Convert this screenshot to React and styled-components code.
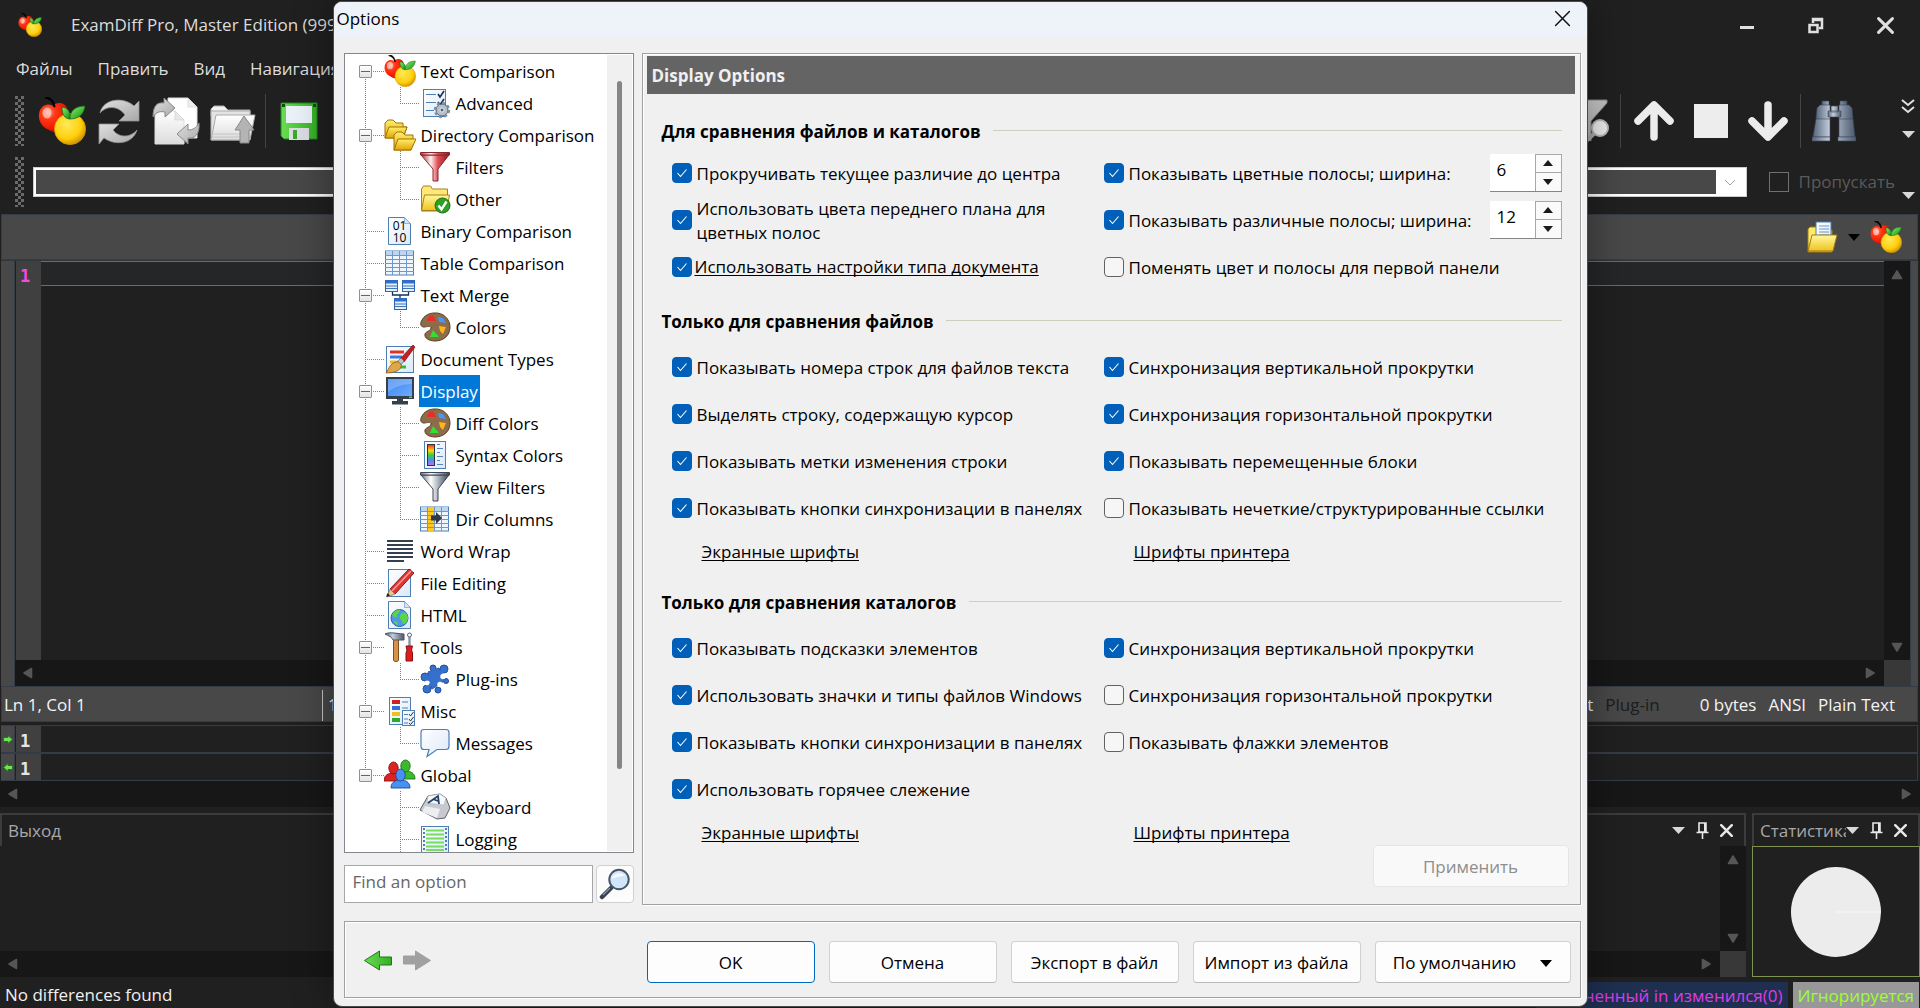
import React, { useState } from "react";
import styled, { createGlobalStyle, css } from "styled-components";

const GlobalStyle = createGlobalStyle`
  * { box-sizing: border-box; }
  html, body { margin: 0; background: #202020; }
  body, button, input { font: 17px/24px "Open Sans", "Noto Sans", sans-serif; }
  button { padding: 0; border: 0; background: none; color: inherit; }
  svg { display: block; flex: none; }
`;

/* ---------- icons ---------- */

const Icon = ({ size = 32, w, h, box = 32, boxH, children }) => (
  <svg width={w || size} height={h || size} viewBox={`0 0 ${box} ${boxH || box}`} aria-hidden="true">
    {children}
  </svg>
);

const DefsHolder = styled.svg`
  position: absolute;
`;

const SharedDefs = () => (
  <DefsHolder width="0" height="0" aria-hidden="true">
    <defs>
      <radialGradient id="gRed" cx=".32" cy=".32" r=".75">
        <stop offset="0" stopColor="#ff9a80" /><stop offset=".3" stopColor="#ff3a18" />
        <stop offset=".75" stopColor="#f01800" /><stop offset="1" stopColor="#a81000" />
      </radialGradient>
      <radialGradient id="gYellow" cx=".4" cy=".35" r=".7">
        <stop offset="0" stopColor="#ffe95a" /><stop offset=".65" stopColor="#ffcf0c" /><stop offset="1" stopColor="#c98a00" />
      </radialGradient>
      <linearGradient id="gLeaf" x1="0" y1="0" x2="1" y2="1">
        <stop offset="0" stopColor="#8cf070" /><stop offset="1" stopColor="#0f8a10" />
      </linearGradient>
      <linearGradient id="gGrey" x1="0" y1="0" x2="1" y2="1">
        <stop offset="0" stopColor="#e0e0e0" /><stop offset="1" stopColor="#a8a8a8" />
      </linearGradient>
      <linearGradient id="gPaper" x1="0" y1="0" x2="1" y2="1">
        <stop offset="0" stopColor="#ffffff" /><stop offset="1" stopColor="#dbe9f8" />
      </linearGradient>
      <linearGradient id="gWhite" x1="0" y1="0" x2="0" y2="1">
        <stop offset="0" stopColor="#ffffff" /><stop offset="1" stopColor="#dcdcdc" />
      </linearGradient>
      <linearGradient id="gFolder" x1="0" y1="0" x2="0" y2="1">
        <stop offset="0" stopColor="#fff8a0" /><stop offset="1" stopColor="#efc31c" />
      </linearGradient>
      <linearGradient id="gGold" x1="0" y1="0" x2="0" y2="1">
        <stop offset="0" stopColor="#ffef70" /><stop offset="1" stopColor="#e3a400" />
      </linearGradient>
      <linearGradient id="gGreen" x1="0" y1="0" x2="1" y2="0">
        <stop offset="0" stopColor="#6bdc55" /><stop offset="1" stopColor="#35ad25" />
      </linearGradient>
      <linearGradient id="gSteel" x1="0" y1="0" x2="1" y2="0">
        <stop offset="0" stopColor="#56657a" /><stop offset=".4" stopColor="#c3cedb" /><stop offset="1" stopColor="#4c5a6e" />
      </linearGradient>
      <linearGradient id="gRainbow" x1="0" y1="0" x2="0" y2="1">
        <stop offset="0" stopColor="#ff2020" /><stop offset=".28" stopColor="#ffd810" /><stop offset=".5" stopColor="#3ccc3c" />
        <stop offset=".75" stopColor="#4a90f0" /><stop offset="1" stopColor="#c070f0" />
      </linearGradient>
      <linearGradient id="gFunnelRed" x1="0" y1="0" x2="1" y2="0">
        <stop offset="0" stopColor="#b03038" /><stop offset=".35" stopColor="#fff0f0" /><stop offset=".6" stopColor="#e05055" /><stop offset="1" stopColor="#8a1a22" />
      </linearGradient>
      <linearGradient id="gFunnelGrey" x1="0" y1="0" x2="1" y2="0">
        <stop offset="0" stopColor="#6a7280" /><stop offset=".35" stopColor="#ffffff" /><stop offset=".65" stopColor="#a0a8b4" /><stop offset="1" stopColor="#3c4450" />
      </linearGradient>
      <linearGradient id="gScreen" x1="0" y1="0" x2="1" y2="1">
        <stop offset="0" stopColor="#3d86ee" /><stop offset="1" stopColor="#6cabff" />
      </linearGradient>
    </defs>
  </DefsHolder>
);

const Apples = ({ size = 32 }) => (
  <Icon size={size} box={48}>
    <path d="M15 9c3-4 12-5 15 4 2 7-2 17-8 21-4 2-8 1-11-1C4 30 0 24 1 17 2 9 9 5 15 9z" fill="url(#gRed)" />
    <circle cx="32" cy="32" r="15.600" fill="url(#gYellow)" stroke="#d89a00" strokeWidth=".8" />
    <path d="M16 10C15 5 12 2 7 1c5-2 9 2 10 9z" fill="#000" stroke="#000" />
    <path d="M32 22c-5 0-8-4-8-12 6 1 9 5 8 12z" fill="url(#gLeaf)" stroke="#0a6a0a" strokeWidth=".7" />
    <path d="M32 22c0-8 5-13 15-13-1 8-6 13-15 13z" fill="url(#gLeaf)" stroke="#0a6a0a" strokeWidth=".7" />
    <ellipse cx="9" cy="16" rx="4.500" ry="5.500" fill="#fff" opacity=".5" />
  </Icon>
);

const Refresh = () => (
  <Icon size={48} box={48}>
    <g fill="url(#gGrey)" stroke="#909090" strokeWidth=".8">
      <path d="M5 16C8 2 28-1 39 9l5-5v20H24l6-6C24 9 12 8 5 16z" />
      <path d="M42 33C38 47 20 49 9 41l-5 6V27h20l-6 6c6 8 17 8 24 0z" />
    </g>
  </Icon>
);

const SyncDocs = () => (
  <Icon size={48} box={48}>
    <path d="M16 1h20l9 9v31H16z" fill="#fff" stroke="#ddd" />
    <path d="M36 1v9h9z" fill="#eee" stroke="#ccc" strokeWidth=".6" />
    <path d="M3 14h20l9 9v24H3z" fill="url(#gWhite)" stroke="#ddd" />
    <path d="M23 14v9h9z" fill="#e8e8e8" stroke="#ccc" strokeWidth=".6" />
    <path d="M1 20C1 9 5 5 12 6V1l11 10-10 9v-5c-5-1-9 0-12 5z" fill="url(#gGrey)" stroke="#888" />
    <path d="M47 26c1 11-4 16-11 15v6L25 37l11-10v6c5 0 8-2 11-7z" fill="url(#gGrey)" stroke="#888" />
  </Icon>
);

const FolderUp = () => (
  <Icon size={48} box={48}>
    <path d="M2 12l3-3h10l4 4h22v6H2z" fill="#f2f2f2" stroke="#aaa" />
    <path d="M2 14h39v29H2z" fill="#e4e4e4" stroke="#aaa" />
    <path d="M7 18h39l-5 25H2z" fill="url(#gWhite)" stroke="#aaa" />
    <path d="M3 37h38M3 40h38" stroke="#c4c4c4" />
    <path d="M35 19l10 14h-5v13h-9V33h-5z" fill="#b4b4b4" stroke="#888" />
  </Icon>
);

const Floppy = () => (
  <Icon size={38} box={38}>
    <path d="M1 1h36v36H4l-3-3z" fill="url(#gGreen)" stroke="#1c8a14" />
    <rect x="6" y="4" width="26" height="17" fill="#eaf2f8" />
    <rect x="2" y="2" width="3" height="3" fill="#0c500a" /><rect x="33" y="2" width="3" height="3" fill="#0c500a" />
    <rect x="9" y="26" width="20" height="12" fill="#dcdce4" />
    <rect x="13" y="28" width="4" height="9" fill="#35ad25" />
  </Icon>
);

const FunnelSearch = () => (
  <Icon size={48} box={48}>
    <path d="M0 3h43v3L27 24v20l-8-6V24L0 6z" fill="url(#gGrey)" stroke="#888" />
    <path d="M20 46l12-11" stroke="#aaa" strokeWidth="4" />
    <circle cx="36" cy="31" r="8" fill="#eee" stroke="#bbb" strokeWidth="2" />
  </Icon>
);

const BigArrow = ({ down }) => (
  <Icon size={40} box={40}>
    <g transform={down ? "rotate(180 20 20)" : undefined} stroke="#ececec" strokeWidth="7.500" fill="none" strokeLinecap="round" strokeLinejoin="round">
      <path d="M20 36V5M4 20L20 4l16 16" />
    </g>
  </Icon>
);

const Square = () => (
  <Icon size={34} box={34}><rect width="34" height="34" fill="#ededed" /></Icon>
);

const Binoculars = () => (
  <Icon size={44} box={44}>
    <g fill="url(#gSteel)" stroke="#3c485a" strokeWidth=".6">
      <path d="M10 2h7v5h-7zM28 2h7v5h-7z" />
      <path d="M5 9l3-3h10v15L4 20zM40 9l-3-3H27v15l14-1z" />
      <path d="M4 20h14v18H1zM41 20H27v18h16z" />
      <path d="M0 38h18v4H0zM26 38h18v4H26z" />
      <path d="M16 12h13v6H16zM19 7h7v6h-7z" />
    </g>
  </Icon>
);

const OpenDoc = () => (
  <Icon size={32}>
    <path d="M2 8l2-2h8l2 3h12v22H2z" fill="#ffe96a" stroke="#a07a10" />
    <path d="M10 1h15v20H10z" fill="url(#gPaper)" stroke="#4a7ab8" />
    <path d="M13 5h10M13 8h10M13 11h10M13 14h10" stroke="#6f96c8" />
    <path d="M6 14h25l-4 16H2z" fill="url(#gFolder)" stroke="#a07a10" />
  </Icon>
);

const Tri = ({ dir = "down", w = 13, h = 7, color = "#d8d8d8" }) => {
  const d = { down: "M0 0h12L6 6z", up: "M0 6h12L6 0z" }[dir];
  return <svg width={w} height={h} viewBox="0 0 12 6" preserveAspectRatio="none" aria-hidden="true"><path d={d} fill={color} /></svg>;
};

const ScrollArrow = ({ dir }) => (
  <svg width="12" height="12" viewBox="0 0 12 12" aria-hidden="true">
    <path
      transform={`rotate(${{ up: 0, right: 90, down: 180, left: 270 }[dir]} 6 6)`}
      d="M6 2l4.500 7.500h-9z" fill="#565656" stroke="#565656" strokeWidth="1.600" strokeLinejoin="round"
    />
  </svg>
);

const Pin = () => (
  <svg width="13" height="17" viewBox="0 0 13 17" aria-hidden="true">
    <path d="M3 1h7v9H3zM0.500 10.500h12M6.500 10v7" fill="none" stroke="#e8e8e8" strokeWidth="1.600" />
    <path d="M8 1h2v9H8z" fill="#e8e8e8" />
  </svg>
);

const Cross = ({ size = 15, color = "#e8e8e8", stroke = 2.6 }) => (
  <svg width={size} height={size} viewBox="0 0 16 16" aria-hidden="true">
    <path d="M1.500 1.500l13 13M14.500 1.500l-13 13" stroke={color} strokeWidth={stroke} strokeLinecap="round" />
  </svg>
);

const Chevrons = () => (
  <svg width="14" height="15" viewBox="0 0 14 15" aria-hidden="true">
    <path d="M1 1l6 5 6-5M1 8l6 5 6-5" fill="none" stroke="#e0e0e0" strokeWidth="2" />
  </svg>
);

const SmallArrow = ({ left }) => (
  <svg width="10" height="9" viewBox="0 0 10 9" aria-hidden="true">
    <path transform={left ? "rotate(180 5 4.500)" : undefined} d="M.5 2.500h4.500v-2l4.500 4-4.500 4v-2H.5z" fill="#6fe455" stroke="#1f7a14" />
  </svg>
);

const Funnel = ({ fill, edge }) => (
  <Icon>
    <path d="M2 4h28L19 18v12h-5V18z" fill={`url(#${fill})`} stroke={edge} />
    <path d="M1.500 1.500h29v2.500h-29z" fill={`url(#${fill})`} stroke={edge} />
  </Icon>
);

const Palette = () => (
  <Icon>
    <path d="M15 2c9-1 16 6 16 14 0 9-7 14-15 14-6 0-11-3-10-7 1-3 6-3 6-6s-4-1-7-1c-4 0-4-4-2-7 2-4 7-7 12-7z" fill="#8c6d49" stroke="#57401f" />
    <path d="M10 5l4-1 3 6H8z" fill="#f02a2a" /><path d="M19 6l5 1 3 5-7-1z" fill="#4a94ff" />
    <path d="M20 15l7 1-3 7-3-3z" fill="#ffb41c" /><path d="M14 19l6 7h-9z" fill="#38dc38" />
  </Icon>
);

const Person = ({ x, y, c, e }) => (
  <g transform={`translate(${x} ${y})`} fill={c} stroke={e} strokeWidth=".9">
    <path d="M0 19c0-5 3-7 7-8h5c4 1 7 3 7 8z" />
    <ellipse cx="9.500" cy="6" rx="4.700" ry="6" />
  </g>
);

const Grid = ({ y = 4, children }) => (
  <>
    <rect x="1.500" y={y} width="28" height="24" fill="#eef5fc" stroke="#4d7fb5" />
    <rect x="2" y={y} width="27" height="4.500" fill="#bcd6f0" />
    {children}
    <path d={`M1 ${y + 4.5}h29M1 ${y + 8.500}h29M1 ${y + 12.500}h29M1 ${y + 16.500}h29M1 ${y + 20.500}h29M8.500 ${y}v24M15.500 ${y}v24M22.500 ${y}v24`} stroke="#6d98c8" />
  </>
);

const Sheet = () => (
  <>
    <path d="M4.500 2.500h16l6 6v21h-22z" fill="url(#gPaper)" stroke="#4d7fb5" />
    <path d="M20.500 2.500v6h6z" fill="#d5e5f5" stroke="#7fa5cf" strokeWidth=".8" />
  </>
);

const MiniTable = ({ x, y }) => (
  <g>
    <rect x={x} y={y} width="12" height="11" fill="#e2effc" stroke="#2f66b0" />
    <rect x={x} y={y} width="12" height="3" fill="#2f6fd0" />
    <path d={`M${x} ${y + 5.500}h12M${x} ${y + 8}h12`} stroke="#2f66b0" strokeWidth=".9" />
  </g>
);

const treeIcons = {
  apples: <Apples />,
  advanced: (
    <Icon>
      <rect x="4.500" y="2.500" width="22" height="27" fill="url(#gPaper)" stroke="#4d7fb5" />
      <path d="M7 7.500h10M7 15.500h10M7 23.500h8" stroke="#4d7fb5" />
      <path d="M19 7l2 3 4-6M19 15l2 3 4-6" fill="none" stroke="#14305c" strokeWidth="1.600" />
      <circle cx="23" cy="23" r="6" fill="#b4c0cc" stroke="#4f5f70" strokeWidth="1" />
      <circle cx="23" cy="23" r="7" fill="none" stroke="#7f8e9e" strokeWidth="2.400" strokeDasharray="3 2.500" />
      <circle cx="23" cy="23" r="2" fill="#4f5f70" stroke="#e8eef4" />
    </Icon>
  ),
  folders: (
    <Icon>
      <path d="M1 4l3-3h5l3 3h7v4h4l-4 11H1z" fill="url(#gGold)" stroke="#a07400" />
      <path d="M5 8h18l-4 11H1z" fill="url(#gGold)" stroke="#a07400" />
      <path d="M10 16l3-3h5l3 3h8v4l-2 11H10z" fill="url(#gGold)" stroke="#a07400" />
      <path d="M14 20h18l-5 11H10z" fill="url(#gGold)" stroke="#a07400" />
    </Icon>
  ),
  filterRed: <Funnel fill="gFunnelRed" edge="#8a2830" />,
  folderCheck: (
    <Icon>
      <path d="M2.500 6l2-3h7l2 3h15v22h-26z" fill="#ffe878" stroke="#a8801a" />
      <path d="M5.500 12h25l-3 15.500h-25z" fill="url(#gFolder)" stroke="#a8801a" />
      <circle cx="23.500" cy="22.500" r="7.500" fill="#2ea024" stroke="#1a7014" />
      <path d="M19.500 22.500l3 4 5-8" fill="none" stroke="#fff" strokeWidth="2.400" />
    </Icon>
  ),
  binary: (
    <Icon>
      <Sheet />
      <text x="15.500" y="15" fontSize="12" fontFamily="Open Sans" textAnchor="middle">01</text>
      <text x="15.500" y="27" fontSize="12" fontFamily="Open Sans" textAnchor="middle">10</text>
    </Icon>
  ),
  table: <Icon><Grid /></Icon>,
  merge: (
    <Icon>
      <path d="M8.500 12v4h16v-4M16 16v4" fill="none" stroke="#14305c" strokeWidth="1.300" />
      <MiniTable x={1.5} y={1.5} /><MiniTable x={18.5} y={1.5} /><MiniTable x={10.5} y={19.5} />
    </Icon>
  ),
  palette: <Palette />,
  docTypes: (
    <Icon>
      <rect x="2.500" y="3.500" width="27" height="26" fill="url(#gPaper)" stroke="#4d7fb5" />
      <path d="M6 9h14" stroke="#e03028" strokeWidth="3" /><path d="M6 14h12" stroke="#3a7ae0" strokeWidth="3" />
      <path d="M6 19h8" stroke="#f0c020" strokeWidth="3" /><path d="M13 24h9" stroke="#38b838" strokeWidth="3" />
      <path d="M16 16L29 2l2 2-11 15z" fill="#c02020" stroke="#801010" strokeWidth=".7" />
      <path d="M13 19l4-4 3 3-3 4z" fill="#b8c4d0" stroke="#59687a" strokeWidth=".7" />
      <path d="M12 19c3-1 6 2 5 5-2 5-9 6-15 6 3-4 4-10 10-11z" fill="#dfa64a" stroke="#7c5018" strokeWidth=".7" />
    </Icon>
  ),
  display: (
    <Icon>
      <rect x="2" y="2" width="28" height="22" fill="#35404e" />
      <rect x="4" y="4" width="24" height="17" fill="url(#gScreen)" />
      <path d="M4 4h24v5C18 9 10 12 4 17z" fill="#fff" opacity=".22" />
      <path d="M13 24h6v2h5v3.500H8V26h5z" fill="#35404e" />
      <rect x="25" y="21.500" width="3" height="1.500" fill="#50dc40" />
    </Icon>
  ),
  syntax: (
    <Icon>
      <rect x="5.500" y="2.500" width="21" height="27" fill="url(#gPaper)" stroke="#4d7fb5" />
      <rect x="8.500" y="5.500" width="7" height="21" fill="url(#gRainbow)" stroke="#2a3440" />
      <path d="M18 5.500h3M18 9.500h6M18 13.500h3M18 17.500h6M18 21.500h3M18 25.500h6" stroke="#5585c0" strokeWidth="1.200" />
    </Icon>
  ),
  filterGrey: <Funnel fill="gFunnelGrey" edge="#3c4654" />,
  columns: (
    <Icon>
      <Grid>
        <rect x="8.500" y="4" width="7" height="24" fill="#ffc81e" />
      </Grid>
      <path d="M12 12.500h5V9l6 6-6 6v-3.500h-5z" fill="#2d3946" />
    </Icon>
  ),
  wrap: (
    <Icon><path d="M3 6h26M3 10h26M3 14h26M3 18h26M3 22h26M3 26h17" stroke="#35404e" strokeWidth="2" /></Icon>
  ),
  pencil: (
    <Icon>
      <rect x="4.500" y="2.500" width="22" height="27" fill="url(#gPaper)" stroke="#4d7fb5" />
      <path d="M6 22L25 2l5 4-19 21z" fill="#e03434" stroke="#8a1818" />
      <path d="M8 24L27 4" stroke="#ff9c94" strokeWidth="1.500" />
      <path d="M6 22l5 5-8 3z" fill="#ecc890" stroke="#8a6a3a" strokeWidth=".7" />
      <path d="M2 30l1.500-4 2.500 2.500z" fill="#222" />
    </Icon>
  ),
  html: (
    <Icon>
      <Sheet />
      <circle cx="15.500" cy="19" r="8.500" fill="#4f97e8" stroke="#2c5fa8" />
      <path d="M8 16c2-5 7-6 8-5 0 3-3 3-3 6s-3 1-5-1zM17 15c4-3 6-1 7 3 0 4-2 7-4 7s-1-4-4-5c-1-2 0-4 1-5zM10 22c3 0 4 2 4 4-2 0-4-2-4-4z" fill="#5cd448" />
    </Icon>
  ),
  tools: (
    <Icon>
      <path d="M9.500 8h5v21c0 2-5 2-5 0z" fill="#d6924a" stroke="#80501c" />
      <path d="M1 3c4-2 8-1 19 0v6H9C8 6 5 5 1 3z" fill="url(#gSteel)" stroke="#4a5666" />
      <path d="M25.500 2v13" stroke="#8794a4" strokeWidth="2.400" /><circle cx="25.500" cy="4" r="2" fill="#fff" stroke="#59687a" />
      <path d="M22 15h6.500l-1 4 1 3v8h-6.500v-8l1-3z" fill="#d81e1e" stroke="#8c0f0f" />
    </Icon>
  ),
  plugin: (
    <Icon>
      <g stroke="#1d4a92" fill="#1d4a92">
        <path d="M9 9l11-4 5 13-12 8z" />
        <circle cx="25" cy="6" r="4" /><circle cx="6" cy="14" r="4" /><circle cx="8" cy="26" r="4" /><circle cx="14" cy="5" r="3" />
        <circle cx="27" cy="18" r="2.500" /><circle cx="19" cy="27" r="3" />
      </g>
      <g fill="#3570cc">
        <path d="M9 9l11-4 5 13-12 8z" /><path d="M18 10l6-5 2 2-4 6zM8 11l7 8-6 8-2-1 4-7-6-4z" />
        <circle cx="25" cy="6" r="3.600" /><circle cx="6" cy="14" r="3.600" /><circle cx="8" cy="26" r="3.600" /><circle cx="14" cy="5" r="2.600" />
        <circle cx="27" cy="18" r="2.100" /><circle cx="19" cy="27" r="2.600" />
      </g>
      <circle cx="24" cy="13.500" r="2.700" fill="#fff" /><circle cx="8" cy="20" r="2.400" fill="#fff" /><circle cx="21" cy="21.500" r="2.700" fill="#fff" />
    </Icon>
  ),
  misc: (
    <Icon>
      <rect x="5.500" y="2.500" width="21" height="27" fill="url(#gPaper)" stroke="#4d7fb5" />
      <path d="M8 7h8" stroke="#d02020" strokeWidth="4" /><path d="M8 13h8" stroke="#3070d8" strokeWidth="4" />
      <path d="M8 19h8" stroke="#f0c020" strokeWidth="4" /><path d="M8 25h8" stroke="#30a828" strokeWidth="4" />
      <path d="M18 7h6M18 13h6" stroke="#4d7fb5" />
      <rect x="18.500" y="15.500" width="12" height="15" fill="url(#gPaper)" stroke="#4d7fb5" />
      <path d="M20 19.500h4M20 24h4M20 28h4" stroke="#4d7fb5" />
      <path d="M25 19l1.500 2 3-4M25 24l1.500 2 3-4M25 28l1.500 1.500 3-3.500" fill="none" stroke="#2d3946" />
    </Icon>
  ),
  bubble: (
    <Icon>
      <path d="M5 2.500h22c2 0 3 1 3 3v14c0 2-1 3-3 3h-9l-10 7 2-7H5c-2 0-3-1-3-3v-14c0-2 1-3 3-3z" fill="url(#gPaper)" stroke="#4d7fb5" strokeWidth="1.200" />
    </Icon>
  ),
  people: (
    <Icon>
      <Person x={12} y={1} c="#3cb82c" e="#1d7414" /><Person x={0} y={3} c="#dc2222" e="#8c1010" /><Person x={7} y={10} c="#4a90f0" e="#1d4a92" />
    </Icon>
  ),
  key: (
    <Icon>
      <path d="M1 19L9 5l12-2 6 4 4 10-5 10-8 1z" fill="#c6cace" stroke="#5c6268" />
      <path d="M9 5l12-2 6 4-2 7-17-2z" fill="#f6f8fa" stroke="#a8aeb4" strokeWidth=".6" />
      <path d="M6 15l15 3-3 9-15-6z" fill="#eceef0" />
      <path d="M9 12l10-7 1 8M14 8l5 2" fill="none" stroke="#22406c" strokeWidth="1.800" />
    </Icon>
  ),
  log: (
    <Icon>
      <rect x="2.500" y="3.500" width="27" height="26" fill="url(#gPaper)" stroke="#4d7fb5" />
      <path d="M7 7.500h18M7 11.500h18M7 15.500h18M7 19.500h18M7 23.500h18M7 27h18" stroke="#76dc62" strokeWidth="2" />
      <path d="M5 5v24M27 5v24" stroke="#4d7fb5" strokeWidth="2" strokeDasharray="2 2" />
    </Icon>
  ),
};

const Magnifier = () => (
  <Icon>
    <path d="M3 29l9-9" stroke="#36404e" strokeWidth="4.500" strokeLinecap="round" />
    <path d="M4 27l7-7" stroke="#8795a6" strokeWidth="1.200" />
    <circle cx="20" cy="11.500" r="9.700" fill="#cfe6fa" stroke="#4a5666" strokeWidth="2" />
    <path d="M12.500 11c1-6 10-8 14-3-5 0-9 1-14 3z" fill="#fff" opacity=".8" />
  </Icon>
);

const NavArrow = ({ right, fill, stroke }) => (
  <svg width="28" height="21" viewBox="0 0 28 21" aria-hidden="true">
    <path transform={right ? "rotate(180 14 10.500)" : undefined} d="M.5 10.500L15.500 1v6H27.500v8H15.500v5z" fill={fill} stroke={stroke} />
  </svg>
);

/* ---------- application window ---------- */

const Window = styled.div`
  position: relative;
  display: flex;
  flex-direction: column;
  min-height: 100vh;
  background: #202020;
  color: #dcdcdc;
  overflow: hidden;
`;

const TitleBar = styled.header`
  display: flex;
  align-items: center;
  height: 50px;
  padding: 0 26px 0 18px;
  white-space: nowrap;
  h1 { flex: 1; margin: 0 0 0 29px; font-size: 17px; font-weight: 400; }
`;

const WindowButtons = styled.div`
  display: flex;
  align-items: center;
  gap: 53px;
`;

const MenuBar = styled.nav`
  display: flex;
  align-items: center;
  gap: 25px;
  height: 38px;
  padding: 0 16px;
`;

const ToolBar = styled.div`
  display: flex;
  align-items: center;
  height: ${(p) => p.$height}px;
  padding: 0 5px 0 15px;
`;

const Grip = styled.span`
  width: 9px;
  height: 50px;
  margin-right: 9px;
  background:
    conic-gradient(transparent 75%, #6a6a6a 0) 0 0 / 6px 6px,
    conic-gradient(transparent 75%, #6a6a6a 0) 3px 3px / 6px 6px;
`;

const Tool = styled.button`
  display: flex;
  align-items: center;
  justify-content: center;
  width: 57px;
  height: 54px;
`;

const Divider = styled.span`
  width: 1px;
  height: 54px;
  margin: 0 4px;
  background: #444;
`;

const Spacer = styled.span`
  flex: 1;
`;

const Overflow = styled.div`
  display: flex;
  flex-direction: column;
  align-items: center;
  justify-content: ${(p) => (p.$end ? "flex-end" : "space-between")};
  height: 44px;
  margin-left: ${(p) => (p.$end ? 7 : 39)}px;
  padding-bottom: 5px;
`;

const ComboBox = styled.div`
  display: flex;
  flex: 1;
  height: 30px;
  margin-right: 22px;
  border: 1px solid #ccc;
  background: #fff;
  padding: 2px;
  input { flex: 1; min-width: 0; border: 0; background: #484848; color: #fff; outline: 0; }
  button { display: flex; align-items: center; justify-content: center; width: 28px; }
`;

const SkipLabel = styled.label`
  display: flex;
  align-items: center;
  gap: 10px;
  color: #5a5a5a;
  input { appearance: none; width: 20px; height: 20px; margin: 0; border: 1px solid #707070; }
`;

const PaneHeader = styled.div`
  display: flex;
  align-items: center;
  justify-content: flex-end;
  gap: 10px;
  height: 46px;
  margin: 3px 2px 0 1px;
  padding-right: 15px;
  border: 1px solid #363c46;
  background: #484848;
`;

const Editor = styled.div`
  display: flex;
  flex: 1;
  margin: 0 2px 0 1px;
  border-top: 1px solid #30353e;
`;

const Strip = styled.div`
  display: flex;
  align-items: center;
  justify-content: center;
  flex: none;
  width: ${(p) => p.$width}px;
  background: #484848;
  border: solid #363c46;
  border-width: 0 ${(p) => (p.$left ? 0 : 1)}px 0 ${(p) => (p.$left ? 1 : 0)}px;
`;

const EditorBody = styled.div`
  display: flex;
  flex: 1;
  flex-direction: column;
`;

const EditorRow = styled.div`
  display: flex;
  flex: 1;
`;

const LineNumbers = styled.div`
  width: 25px;
  margin-left: 1px;
  padding: 5px 0 0 4px;
  background: #404040;
  color: ${(p) => (p.$current ? "#f24be0" : "#e6e6e6")};
  font: bold 17px/21px "DejaVu Sans Mono", monospace;
`;

const CodeArea = styled.div`
  flex: 1;
`;

const CurrentLine = styled.div`
  height: 25px;
  border: solid #5f6c86;
  border-width: 1px 0;
  background: #242628;
`;

const VScroll = styled.div`
  display: flex;
  flex-direction: column;
  align-items: center;
  justify-content: space-between;
  width: 26px;
  padding: 8px 0 7px;
  background: #171717;
`;

const HScroll = styled.div`
  display: flex;
  flex: ${(p) => (p.$grow ? 1 : "none")};
  align-items: center;
  justify-content: space-between;
  height: 26px;
  padding: 0 8px 0 7px;
  background: #171717;
`;

const HScrollRow = styled.div`
  display: flex;
`;

const Corner = styled.span`
  width: 26px;
  height: 26px;
  background: #383838;
`;

const PaneStatus = styled.div`
  display: flex;
  align-items: center;
  height: 36px;
  margin: 0 2px 3px 1px;
  padding: 2px 22px 0 2px;
  border: 1px solid #363c46;
  background: #484848;
  color: #f4f4f4;
`;

const StatusText = styled.span`
  margin-left: ${(p) => p.$gap || 0}px;
  color: ${(p) => (p.$dim ? "#1c1c1c" : "inherit")};
  width: ${(p) => (p.$width ? `${p.$width}px` : "auto")};
`;

const StatusRule = styled.span`
  width: 1px;
  height: 31px;
  margin-right: 5px;
  background: #c8c8c8;
`;

const DiffLine = styled.div`
  display: flex;
  height: 28px;
  margin: 0 2px 0 1px;
  border: solid #363c46;
  border-width: 1px 1px 1px 0;
`;

const Docks = styled.div`
  display: flex;
  gap: 6px;
  height: 164px;
  margin-top: 6px;
`;

const Dock = styled.section`
  display: flex;
  flex-direction: column;
  flex: ${(p) => (p.$width ? `0 0 ${p.$width}px` : 1)};
  min-width: 0;
`;

const DockHeader = styled.div`
  display: flex;
  align-items: center;
  height: 33px;
  padding: 0 11px 0 6px;
  border: 2px solid #3c3c3c;
  border-bottom: 0;
  color: #a8a8a8;
  span { flex: 1; overflow: hidden; white-space: nowrap; }
  button + button { margin-left: 11px; }
`;

const DockBody = styled.div`
  display: flex;
  flex: 1;
  justify-content: flex-end;
`;

const ChartFrame = styled.div`
  display: grid;
  place-items: center;
  flex: 1;
  border: 1px solid #7f9150;
`;

const StatusBar = styled.footer`
  display: flex;
  align-items: center;
  gap: 5px;
  height: 31px;
  padding: 4px 1px 0 5px;
  color: #f0f0f0;
`;

const StatusChip = styled.span`
  height: 26px;
  padding: 0 5px;
  line-height: 28px;
  background: ${(p) => p.$bg};
  color: ${(p) => p.$color};
`;

/* ---------- dialog ---------- */

const Overlay = styled.div`
  position: absolute;
  inset: 0;
  display: flex;
  justify-content: center;
  padding: 1px 0;
`;

const Dialog = styled.div`
  display: flex;
  flex-direction: column;
  width: 100%;
  max-width: 1255px;
  border: 1px solid #4a4a4a;
  border-radius: 9px;
  background: #f0f0f0;
  color: #000;
  box-shadow: 0 0 40px rgba(0, 0, 0, 0.4);
  overflow: hidden;
`;

const DialogTitle = styled.header`
  display: flex;
  align-items: center;
  justify-content: space-between;
  height: 35px;
  padding: 0 16px 2px 3px;
  background: #eef3fa;
  h2 { margin: 0; font-size: 17px; font-weight: 400; }
`;

const DialogBody = styled.div`
  display: flex;
  flex: 1;
  gap: 8px;
  padding: 16px 6px 16px 10px;
`;

const SideColumn = styled.div`
  display: flex;
  flex-direction: column;
  gap: 12px;
  width: 290px;
  padding-bottom: 2px;
`;

const TreeFrame = styled.div`
  display: flex;
  flex: 1 1 0;
  min-height: 0;
  overflow: hidden;
  padding: 1px;
  border: 1px solid #828790;
  background: #fff;
`;

const Tree = styled.ul`
  flex: 1;
  margin: 0;
  padding: 0 0 0 13px;
  list-style: none;
`;

const TreeScroll = styled.div`
  width: 25px;
  padding: 26px 10px 82px;
  background: #f0f0f0;
  span { display: block; width: 5px; height: 100%; border-radius: 3px; background: #858585; }
`;

const TreeRow = styled.li`
  display: flex;
  height: 32px;
`;

const vDots = "repeating-linear-gradient(to bottom, #808080 0 1px, transparent 1px 2px)";
const hDots = "repeating-linear-gradient(to right, #808080 0 1px, transparent 1px 2px)";

const Indent = styled.span`
  flex: none;
  width: 35px;
  background: ${(p) => (p.$line ? `${vDots} 6px 0 / 1px 100% no-repeat` : "none")};
`;

const extents = { first: "6px 16px / 1px 16px", last: "6px 0 / 1px 16px", middle: "6px 0 / 1px 32px" };

const Branch = styled.span`
  flex: none;
  width: 25px;
  padding-top: 10px;
  background:
    ${vDots} ${(p) => extents[p.$pos]} no-repeat,
    ${hDots} 6px 16px / 19px 1px no-repeat;
`;

const Expander = styled.button`
  display: grid;
  place-items: center;
  width: 13px;
  height: 13px;
  border: 1px solid #919191;
  border-radius: 1px;
  background: linear-gradient(#fff, #e4e4e4);
  span { width: 9px; height: 1px; background: #4b63a7; }
`;

const TreeLabel = styled.button`
  margin-left: 3px;
  padding: 2px 2px 0;
  white-space: nowrap;
  ${(p) => p.$selected && css`background: #0078d7; color: #fff;`}
`;

const SearchRow = styled.div`
  display: flex;
  gap: 3px;
  height: 38px;
  input {
    flex: 1; min-width: 0; padding: 0 8px 4px; border: 1px solid #a6a6ab; background: #fff; outline: 0;
    &::placeholder { color: #666; opacity: 1; }
  }
  button {
    display: grid; place-items: center; width: 38px;
    border: 1px solid #d0d0d0; border-radius: 4px; background: #fcfcfc;
  }
`;

const Panel = styled.section`
  display: flex;
  flex: 1;
  flex-direction: column;
  min-width: 0;
  padding: 1px 5px 0 3px;
  border: 1px solid #a0a0a0;
  box-shadow: inset 1px 1px #fff, 1px 1px #fff;
`;

const PanelTitle = styled.h3`
  margin: 1px 0 17px 1px;
  padding: 8px 5px 6px;
  background: #646464;
  color: #f0f0f0;
  font-size: 17px;
  line-height: 24px;
`;

const Group = styled.fieldset`
  min-width: 0;
  margin: 0;
  padding: 0 13px 11px 16px;
  border: 0;
`;

const GroupTitle = styled.div`
  display: flex;
  align-items: center;
  gap: 12px;
  height: 38px;
  padding-top: 4px;
  font-weight: 700;
  white-space: nowrap;
  &::after { content: ""; flex: 1; height: 1px; margin-bottom: 4px; background: #cccfbc; }
`;

const Options = styled.div`
  display: grid;
  grid-template-columns: 432fr 458fr;
  grid-auto-rows: 47px;
  align-items: center;
  margin-top: ${(p) => p.$gap || 0}px;
  padding-left: 10px;
`;

const Option = styled.div`
  display: flex;
  align-items: center;
  gap: ${(p) => (p.$tight ? 3 : 5)}px;
  label { padding-top: 2px; }
`;

const CheckBox = styled.span`
  display: grid;
  flex: none;
  > * { grid-area: 1 / 1; }
  input {
    appearance: none; width: 20px; height: 20px; margin: 0;
    border: 1px solid #626262; border-radius: 4px; background: #f6f6f6;
    &:checked { border-color: #005fb8; background: #005fb8; }
  }
  svg { place-self: center; pointer-events: none; }
`;

const Links = styled.div`
  display: grid;
  grid-template-columns: 432fr 428fr;
  padding: 10px 0 8px 40px;
  line-height: 22px;
`;

const TextLink = styled.a`
  justify-self: start;
  color: #000;
  text-decoration: underline;
  text-decoration-thickness: 1px;
  text-decoration-skip-ink: none;
  text-underline-offset: 2px;
`;

const Spinner = styled.span`
  display: flex;
  width: 72px;
  height: 38px;
  margin-left: auto;
  border-bottom: 1px solid #868686;
  background: #fff;
  input { flex: 1; min-width: 0; padding: 0 0 4px 7px; border: 0; background: #fff; outline: 0; appearance: textfield; }
  input::-webkit-inner-spin-button { appearance: none; margin: 0; }
`;

const SpinButtons = styled.span`
  display: flex;
  flex-direction: column;
  width: 27px;
  border: 1px solid #a8a8a8;
  border-bottom: 0;
  background: #fafafa;
  button { display: grid; flex: 1; place-items: center; }
  button + button { border-top: 1px solid #a8a8a8; }
`;

const ApplyRow = styled.div`
  display: flex;
  justify-content: flex-end;
  margin-top: -18px;
  padding-right: 6px;
`;

const PushButton = styled.button`
  display: flex;
  align-items: center;
  justify-content: center;
  flex: none;
  width: ${(p) => (p.$wide ? 196 : 168)}px;
  height: 42px;
  padding-top: 2px;
  border: 1px solid ${(p) => (p.$primary ? "#0067c0" : "#d0d0d0")};
  border-bottom-color: ${(p) => (p.$primary ? "#0067c0" : "#bababa")};
  border-radius: 4px;
  background: #fdfdfd;
  svg { margin-left: 24px; }
  &:disabled { border-color: #e5e5e5; background: #f9f9f9; color: #8e8e8e; }
`;

const DialogFooter = styled.footer`
  display: flex;
  align-items: center;
  gap: 14px;
  height: 77px;
  margin: 0 6px 8px 10px;
  padding: 5px 9px 0 19px;
  border: 1px solid #a0a0a0;
  box-shadow: inset 1px 1px #fff, 1px 1px #fff;
`;

const NavButtons = styled.div`
  display: flex;
  flex: 1;
  gap: 11px;
  padding-bottom: 4px;
`;

/* ---------- data ---------- */

const nodes = [
  ["apples", "Text Comparison", 0, "first", true],
  ["advanced", "Advanced", 1, "last"],
  ["folders", "Directory Comparison", 0, "middle", true],
  ["filterRed", "Filters", 1, "middle"],
  ["folderCheck", "Other", 1, "last"],
  ["binary", "Binary Comparison", 0, "middle"],
  ["table", "Table Comparison", 0, "middle"],
  ["merge", "Text Merge", 0, "middle", true],
  ["palette", "Colors", 1, "last"],
  ["docTypes", "Document Types", 0, "middle"],
  ["display", "Display", 0, "middle", true],
  ["palette", "Diff Colors", 1, "middle"],
  ["syntax", "Syntax Colors", 1, "middle"],
  ["filterGrey", "View Filters", 1, "middle"],
  ["columns", "Dir Columns", 1, "last"],
  ["wrap", "Word Wrap", 0, "middle"],
  ["pencil", "File Editing", 0, "middle"],
  ["html", "HTML", 0, "middle"],
  ["tools", "Tools", 0, "middle", true],
  ["plugin", "Plug-ins", 1, "last"],
  ["misc", "Misc", 0, "middle", true],
  ["bubble", "Messages", 1, "last"],
  ["people", "Global", 0, "last", true],
  ["key", "Keyboard", 1, "middle", false, true],
  ["log", "Logging", 1, "middle", false, true],
];

const groups = [
  {
    title: "Для сравнения файлов и каталогов",
    options: [
      { text: "Прокручивать текущее различие до центра", on: true },
      { text: "Показывать цветные полосы; ширина:", on: true, value: 6 },
      { text: "Использовать цвета переднего плана для цветных полос", on: true },
      { text: "Показывать различные полосы; ширина:", on: true, value: 12 },
      { text: "Использовать настройки типа документа", on: true, link: true },
      { text: "Поменять цвет и полосы для первой панели" },
    ],
  },
  {
    title: "Только для сравнения файлов",
    gap: 4,
    options: [
      { text: "Показывать номера строк для файлов текста", on: true },
      { text: "Синхронизация вертикальной прокрутки", on: true },
      { text: "Выделять строку, содержащую курсор", on: true },
      { text: "Синхронизация горизонтальной прокрутки", on: true },
      { text: "Показывать метки изменения строки", on: true },
      { text: "Показывать перемещенные блоки", on: true },
      { text: "Показывать кнопки синхронизации в панелях", on: true },
      { text: "Показывать нечеткие/структурированные ссылки" },
    ],
    links: true,
  },
  {
    title: "Только для сравнения каталогов",
    gap: 4,
    options: [
      { text: "Показывать подсказки элементов", on: true },
      { text: "Синхронизация вертикальной прокрутки", on: true },
      { text: "Использовать значки и типы файлов Windows", on: true },
      { text: "Синхронизация горизонтальной прокрутки" },
      { text: "Показывать кнопки синхронизации в панелях", on: true },
      { text: "Показывать флажки элементов" },
      { text: "Использовать горячее слежение", on: true },
    ],
    links: true,
  },
];

/* ---------- parts ---------- */

function OptionRow({ id, option }) {
  const [on, setOn] = useState(!!option.on);
  const [value, setValue] = useState(option.value);
  return (
    <Option $tight={option.link}>
      <CheckBox>
        <input id={id} type="checkbox" checked={on} onChange={(e) => setOn(e.target.checked)} aria-label={option.link ? option.text : undefined} />
        {on && (
          <svg width="12" height="10" viewBox="0 0 12 10" aria-hidden="true">
            <path d="M1.500 5l3 3.500 6-7" fill="none" stroke="#fff" strokeWidth="1.100" />
          </svg>
        )}
      </CheckBox>
      {option.link ? <TextLink href="#types">{option.text}</TextLink> : <label htmlFor={id}>{option.text}</label>}
      {option.value !== undefined && (
        <Spinner>
          <input type="number" aria-label={option.text} value={value} onChange={(e) => setValue(Number(e.target.value))} />
          <SpinButtons>
            <button type="button" aria-label="+" onClick={() => setValue(value + 1)}><Tri dir="up" w={10} h={6} color="#1a1a1a" /></button>
            <button type="button" aria-label="-" onClick={() => setValue(value - 1)}><Tri w={10} h={6} color="#1a1a1a" /></button>
          </SpinButtons>
        </Spinner>
      )}
    </Option>
  );
}

const DockButtons = () => (
  <>
    <button type="button" aria-label="Menu"><Tri /></button>
    <button type="button" aria-label="Pin"><Pin /></button>
    <button type="button" aria-label="Close"><Cross size={13} stroke={3} /></button>
  </>
);

function OptionsDialog() {
  const [selected, setSelected] = useState("Display");
  return (
    <Dialog role="dialog" aria-labelledby="dialog-title">
      <DialogTitle>
        <h2 id="dialog-title">Options</h2>
        <button type="button" aria-label="Close"><Cross size={17} color="#111" stroke={1.4} /></button>
      </DialogTitle>
      <DialogBody>
        <SideColumn>
          <TreeFrame>
            <Tree>
              {nodes.map(([icon, name, level, pos, open, lastParent]) => (
                <TreeRow key={name}>
                  {level === 1 && <Indent $line={!lastParent} />}
                  <Branch $pos={pos}>
                    {open && <Expander type="button" aria-label={name}><span /></Expander>}
                  </Branch>
                  {treeIcons[icon]}
                  <TreeLabel type="button" $selected={selected === name} onClick={() => setSelected(name)}>{name}</TreeLabel>
                </TreeRow>
              ))}
            </Tree>
            <TreeScroll><span /></TreeScroll>
          </TreeFrame>
          <SearchRow>
            <input type="text" placeholder="Find an option" aria-label="Find an option" />
            <button type="button" aria-label="Find"><Magnifier /></button>
          </SearchRow>
        </SideColumn>
        <Panel>
          <PanelTitle>Display Options</PanelTitle>
          {groups.map((g, i) => (
            <Group key={g.title} aria-label={g.title}>
              <GroupTitle>{g.title}</GroupTitle>
              <Options $gap={g.gap}>
                {g.options.map((o, j) => <OptionRow key={o.text} id={`option-${i}-${j}`} option={o} />)}
              </Options>
              {g.links && (
                <Links>
                  <TextLink href="#screen">Экранные шрифты</TextLink>
                  <TextLink href="#printer">Шрифты принтера</TextLink>
                </Links>
              )}
            </Group>
          ))}
          <ApplyRow><PushButton type="button" $wide disabled>Применить</PushButton></ApplyRow>
        </Panel>
      </DialogBody>
      <DialogFooter>
        <NavButtons>
          <button type="button" aria-label="Back"><NavArrow fill="url(#gGreen)" stroke="#1f7a14" /></button>
          <button type="button" aria-label="Forward"><NavArrow right fill="#a0a0a0" stroke="#a0a0a0" /></button>
        </NavButtons>
        <PushButton type="button" $primary>OK</PushButton>
        <PushButton type="button">Отмена</PushButton>
        <PushButton type="button">Экспорт в файл</PushButton>
        <PushButton type="button">Импорт из файла</PushButton>
        <PushButton type="button" $wide>По умолчанию<Tri w={12} h={7} color="#000" /></PushButton>
      </DialogFooter>
    </Dialog>
  );
}

export default function App() {
  return (
    <Window>
      <GlobalStyle />
      <SharedDefs />
      <TitleBar>
        <Apples size={24} />
        <h1>ExamDiff Pro, Master Edition (999</h1>
        <WindowButtons>
          <button type="button" aria-label="Minimize">
            <svg width="16" height="16" viewBox="0 0 16 16"><path d="M1 10.500h14" stroke="#e0e0e0" strokeWidth="3" /></svg>
          </button>
          <button type="button" aria-label="Restore">
            <svg width="16" height="17" viewBox="0 0 16 17">
              <path d="M5 6V2h9v9h-3M5 3h10" fill="none" stroke="#e0e0e0" strokeWidth="2.500" />
              <path d="M1.500 8h8v7h-8z" fill="#202020" stroke="#e0e0e0" strokeWidth="2.500" />
            </svg>
          </button>
          <button type="button" aria-label="Close"><Cross size={17} color="#e0e0e0" stroke={2.8} /></button>
        </WindowButtons>
      </TitleBar>
      <MenuBar>
        {["Файлы", "Править", "Вид", "Навигация"].map((m) => <button type="button" key={m}>{m}</button>)}
      </MenuBar>
      <ToolBar $height={65}>
        <Grip />
        <Tool aria-label="Compare"><Apples size={48} /></Tool>
        <Tool aria-label="Refresh"><Refresh /></Tool>
        <Tool aria-label="Swap"><SyncDocs /></Tool>
        <Tool aria-label="Open"><FolderUp /></Tool>
        <Divider />
        <Tool aria-label="Save"><Floppy /></Tool>
        <Spacer />
        <Tool aria-label="Filter"><FunnelSearch /></Tool>
        <Divider />
        <Tool aria-label="Previous"><BigArrow /></Tool>
        <Tool aria-label="Current"><Square /></Tool>
        <Tool aria-label="Next"><BigArrow down /></Tool>
        <Divider />
        <Tool aria-label="Find"><Binoculars /></Tool>
        <Overflow><Chevrons /><Tri /></Overflow>
      </ToolBar>
      <ToolBar $height={58}>
        <Grip />
        <ComboBox>
          <input type="text" aria-label="Difference" />
          <button type="button" aria-label="Open list">
            <svg width="12" height="7" viewBox="0 0 12 7"><path d="M1 1l5 5 5-5" fill="none" stroke="#a0a0a0" /></svg>
          </button>
        </ComboBox>
        <SkipLabel><input type="checkbox" />Пропускать</SkipLabel>
        <Overflow $end><Tri /></Overflow>
      </ToolBar>
      <PaneHeader>
        <OpenDoc />
        <Tri w={12} h={7} color="#000" />
        <Apples size={32} />
      </PaneHeader>
      <Editor>
        <Strip $width={14} />
        <EditorBody>
          <EditorRow>
            <LineNumbers $current>1</LineNumbers>
            <CodeArea><CurrentLine /></CodeArea>
            <VScroll><ScrollArrow dir="up" /><ScrollArrow dir="down" /></VScroll>
          </EditorRow>
          <HScrollRow>
            <HScroll $grow><ScrollArrow dir="left" /><ScrollArrow dir="right" /></HScroll>
            <Corner />
          </HScrollRow>
        </EditorBody>
        <Strip $width={8} $left />
      </Editor>
      <PaneStatus>
        <StatusText $width={318}>Ln 1, Col 1</StatusText>
        <StatusRule />
        <StatusText>1</StatusText>
        <Spacer />
        <StatusText>t</StatusText>
        <StatusText $gap={12} $dim>Plug-in</StatusText>
        <StatusText $gap={40}>0 bytes</StatusText>
        <StatusText $gap={12}>ANSI</StatusText>
        <StatusText $gap={12}>Plain Text</StatusText>
      </PaneStatus>
      <DiffLine><Strip $width={14}><SmallArrow /></Strip><LineNumbers>1</LineNumbers></DiffLine>
      <DiffLine><Strip $width={14}><SmallArrow left /></Strip><LineNumbers>1</LineNumbers></DiffLine>
      <HScroll><ScrollArrow dir="left" /><ScrollArrow dir="right" /></HScroll>
      <Docks>
        <Dock>
          <DockHeader><span>Выход</span><DockButtons /></DockHeader>
          <DockBody>
            <VScroll><ScrollArrow dir="up" /><ScrollArrow dir="down" /></VScroll>
          </DockBody>
          <HScrollRow>
            <HScroll $grow><ScrollArrow dir="left" /><ScrollArrow dir="right" /></HScroll>
            <Corner />
          </HScrollRow>
        </Dock>
        <Dock $width={168}>
          <DockHeader><span>Статистика</span><DockButtons /></DockHeader>
          <ChartFrame>
            <svg width="90" height="90" viewBox="0 0 90 90" aria-hidden="true">
              <circle cx="45" cy="45" r="45" fill="#ececec" /><path d="M45 45h45" stroke="#f8f8f8" />
            </svg>
          </ChartFrame>
        </Dock>
      </Docks>
      <StatusBar>
        <span>No differences found</span>
        <Spacer />
        <StatusChip $bg="#1e2f50" $color="#dd3be6">Измененный in изменился(0)</StatusChip>
        <StatusChip $bg="#989898" $color="#9cff2e">Игнорируется</StatusChip>
      </StatusBar>
      <Overlay><OptionsDialog /></Overlay>
    </Window>
  );
}
